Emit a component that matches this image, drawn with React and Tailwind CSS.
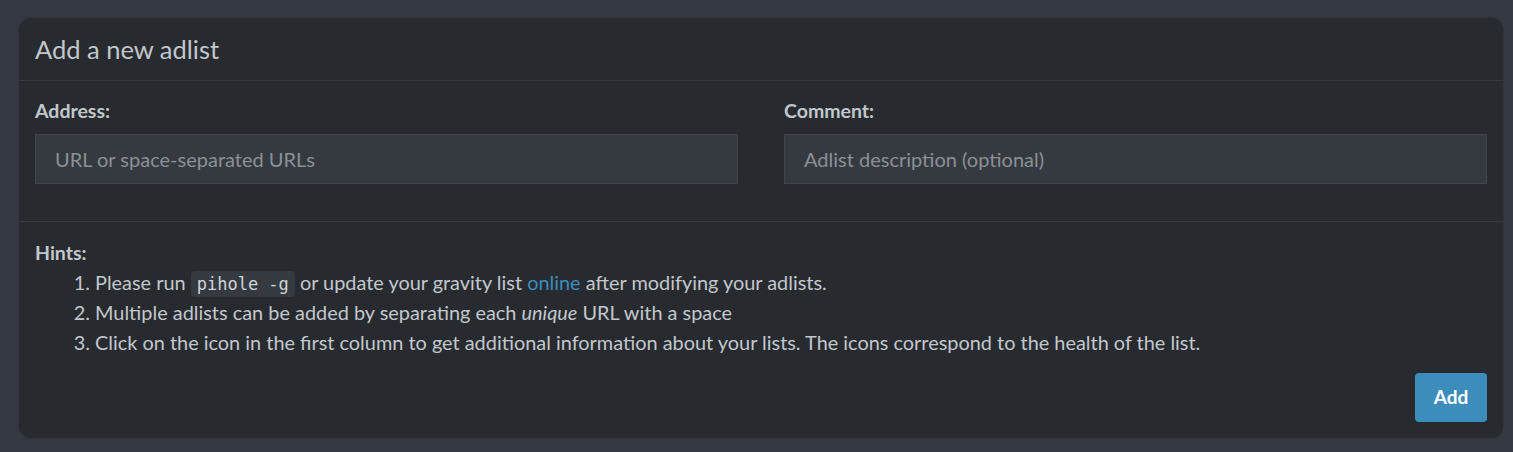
import React from 'react';

function App() {
  return (
    <div className="min-h-[452px] bg-[#353a42] pt-[18px] pl-[19px] pr-[10px] pb-[14px]" style={{ fontFamily: 'Lato, "Noto Sans", sans-serif' }}>
      <div className="bg-[#272b30] rounded-[12px] text-[#c2c7cc] shadow-[0_0_2px_rgba(0,0,0,0.3)]">
        {/* Header */}
        <div className="h-[63px] flex items-center px-4 border-b border-[#353a40]">
          <h3 className="text-[25.5px] text-[#c2c7cc]">Add a new adlist</h3>
        </div>

        {/* Form */}
        <div className="px-4 pt-[19px] pb-[37px] border-b border-[#353a40]">
          <div className="grid grid-cols-2 gap-[46px]">
            <div>
              <label className="block font-bold text-[19.5px] leading-[22px] mb-[12px]">Address:</label>
              <input
                type="text"
                placeholder="URL or space-separated URLs"
                className="w-full h-[50px] bg-[#343a40] border border-[#3f454c] px-[19px] text-[20px] text-[#c2c7cc] placeholder:text-[#8b9096] outline-none"
              />
            </div>
            <div>
              <label className="block font-bold text-[19.5px] leading-[22px] mb-[12px]">Comment:</label>
              <input
                type="text"
                placeholder="Adlist description (optional)"
                className="w-full h-[50px] bg-[#343a40] border border-[#3f454c] px-[19px] text-[20px] text-[#c2c7cc] placeholder:text-[#8b9096] outline-none"
              />
            </div>
          </div>
        </div>

        {/* Hints + button */}
        <div className="px-4 pt-[20px] pb-4">
          <strong className="block text-[19.5px] leading-[22px]">Hints:</strong>
          <ol className="list-decimal pl-[60px] text-[19.9px] mt-[3px]">
            <li className="h-[30px] leading-[30px]">
              Please run{' '}
              <code className="bg-[#343a40] rounded-[4px] px-[6px] py-[3px] text-[17px] leading-[20px] text-[#d0d4d8]" style={{ fontFamily: '"DejaVu Sans Mono", monospace' }}>
                pihole -g
              </code>{' '}
              or update your gravity list <a className="text-[#3c8dbc]" href="#">online</a> after modifying your adlists.
            </li>
            <li className="h-[30px] leading-[30px]">
              Multiple adlists can be added by separating each <em>unique</em> URL with a space
            </li>
            <li className="h-[30px] leading-[30px]">
              Click on the icon in the first column to get additional information about your lists. The icons correspond to the health of the list.
            </li>
          </ol>
          <div className="flex justify-end mt-[16px]">
            <button className="w-[72px] h-[49px] bg-[#3c8dbc] rounded-[4px] text-white font-bold text-[19px]">Add</button>
          </div>
        </div>
      </div>
    </div>
  );
}

export default App;
